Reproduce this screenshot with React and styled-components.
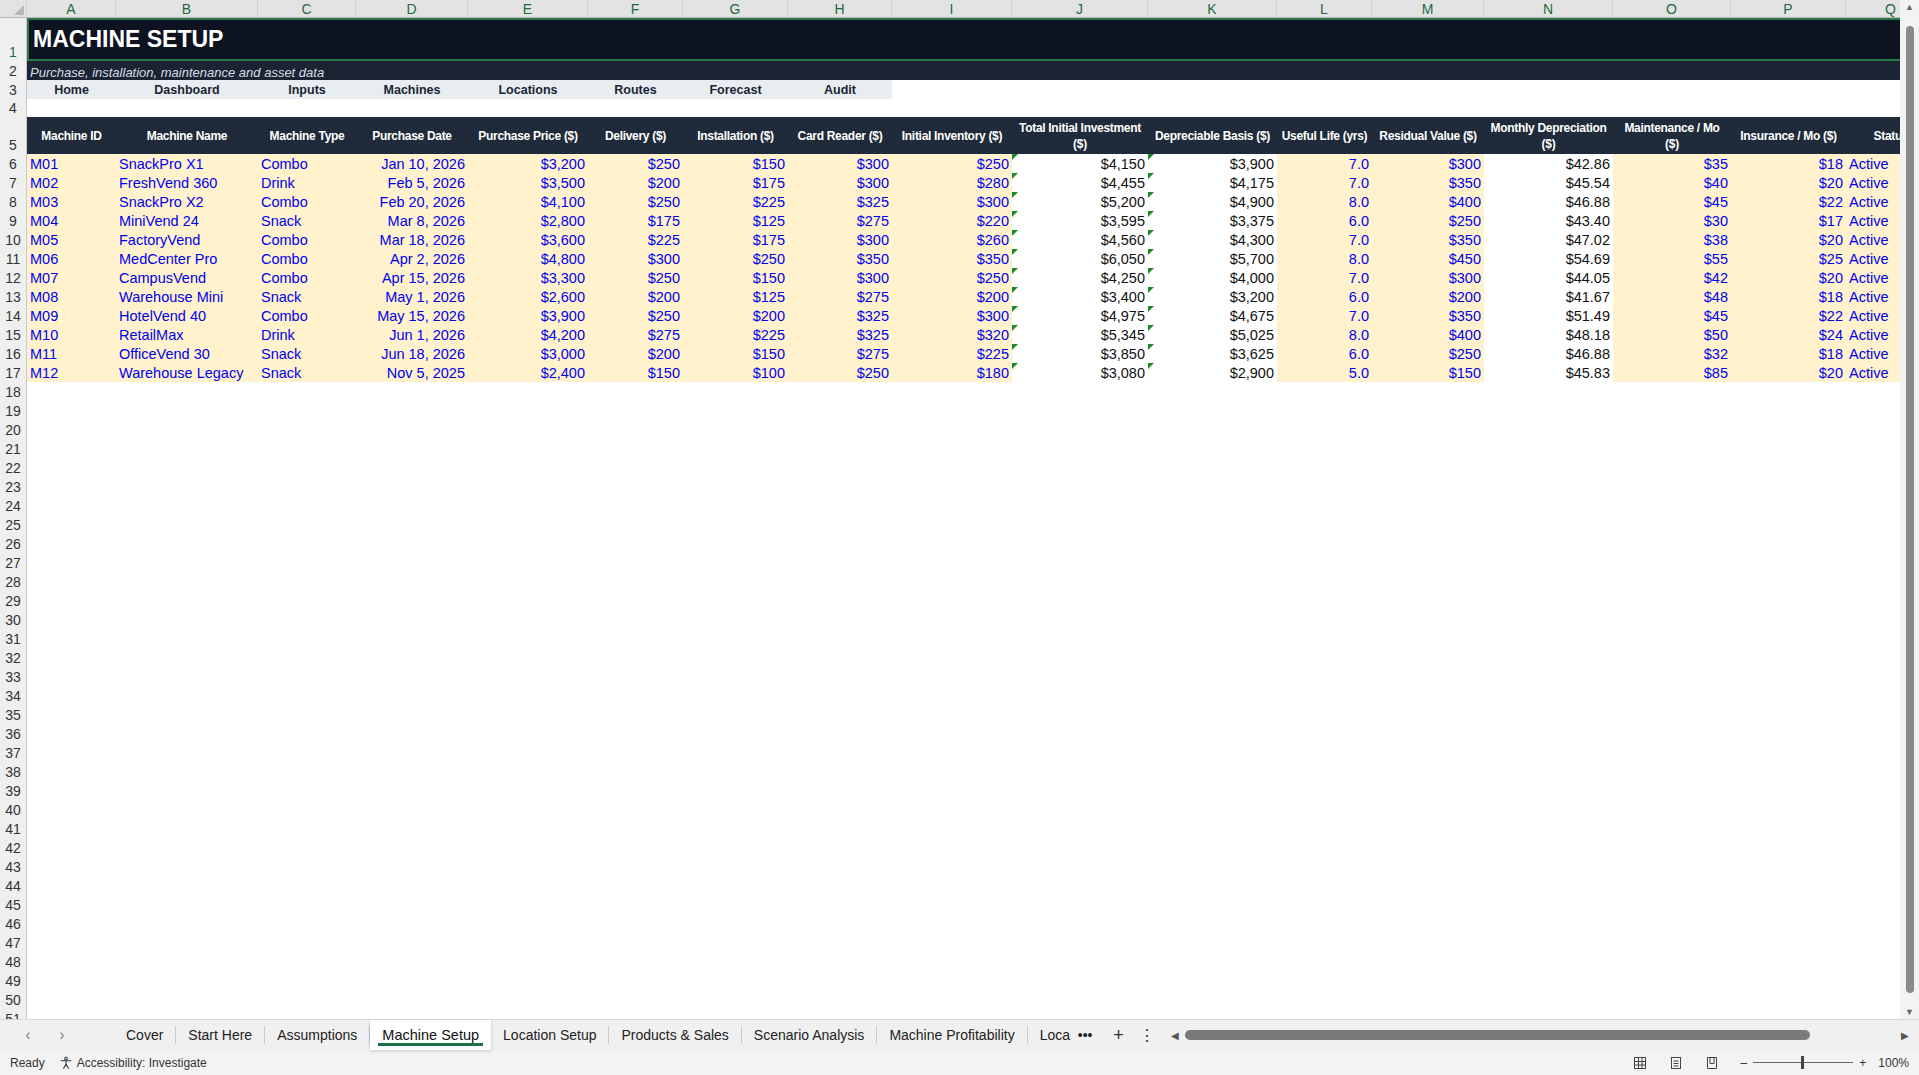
import React from "react";
import styled, { createGlobalStyle } from "styled-components";

const G = createGlobalStyle`
  html,body{margin:0;padding:0;overflow:hidden;background:#fff;}
  body{font-family:"Liberation Sans",Arial,sans-serif;}
`;
const W = [89,142,98,112,120,95,105,104,120,136,129,95,112,129,118,115,90];
const COLS = `27px ${W.map(w=>w+"px").join(" ")}`;
const LET = "ABCDEFGHIJKLMNOPQ".split("");
const HEAD = ["Machine ID","Machine Name","Machine Type","Purchase Date","Purchase Price ($)","Delivery ($)","Installation ($)","Card Reader ($)","Initial Inventory ($)",["Total Initial Investment","($)"],"Depreciable Basis ($)","Useful Life (yrs)","Residual Value ($)",["Monthly Depreciation","($)"],["Maintenance / Mo","($)"],"Insurance / Mo ($)","Status"];
const DATA = [
["M01","SnackPro X1","Combo","Jan 10, 2026","$3,200","$250","$150","$300","$250","$4,150","$3,900","7.0","$300","$42.86","$35","$18","Active"],
["M02","FreshVend 360","Drink","Feb 5, 2026","$3,500","$200","$175","$300","$280","$4,455","$4,175","7.0","$350","$45.54","$40","$20","Active"],
["M03","SnackPro X2","Combo","Feb 20, 2026","$4,100","$250","$225","$325","$300","$5,200","$4,900","8.0","$400","$46.88","$45","$22","Active"],
["M04","MiniVend 24","Snack","Mar 8, 2026","$2,800","$175","$125","$275","$220","$3,595","$3,375","6.0","$250","$43.40","$30","$17","Active"],
["M05","FactoryVend","Combo","Mar 18, 2026","$3,600","$225","$175","$300","$260","$4,560","$4,300","7.0","$350","$47.02","$38","$20","Active"],
["M06","MedCenter Pro","Combo","Apr 2, 2026","$4,800","$300","$250","$350","$350","$6,050","$5,700","8.0","$450","$54.69","$55","$25","Active"],
["M07","CampusVend","Combo","Apr 15, 2026","$3,300","$250","$150","$300","$250","$4,250","$4,000","7.0","$300","$44.05","$42","$20","Active"],
["M08","Warehouse Mini","Snack","May 1, 2026","$2,600","$200","$125","$275","$200","$3,400","$3,200","6.0","$200","$41.67","$48","$18","Active"],
["M09","HotelVend 40","Combo","May 15, 2026","$3,900","$250","$200","$325","$300","$4,975","$4,675","7.0","$350","$51.49","$45","$22","Active"],
["M10","RetailMax","Drink","Jun 1, 2026","$4,200","$275","$225","$325","$320","$5,345","$5,025","8.0","$400","$48.18","$50","$24","Active"],
["M11","OfficeVend 30","Snack","Jun 18, 2026","$3,000","$200","$150","$275","$225","$3,850","$3,625","6.0","$250","$46.88","$32","$18","Active"],
["M12","Warehouse Legacy","Snack","Nov 5, 2025","$2,400","$150","$100","$250","$180","$3,080","$2,900","5.0","$150","$45.83","$85","$20","Active"],
];
const WHITE = [9,10,13];
const NAV = ["Home","Dashboard","Inputs","Machines","Locations","Routes","Forecast","Audit"];

const Page = styled.div`width:1919px;height:1075px;display:flex;flex-direction:column;overflow:hidden;`;
const Main = styled.div`flex:1;display:flex;overflow:hidden;min-height:0;`;
const Sheet = styled.div`flex:1;overflow:hidden;position:relative;`;
const VScroll = styled.div`width:19px;background:#f3f3f3;display:flex;flex-direction:column;align-items:center;justify-content:space-between;
  &>div.t{width:8px;flex:1;margin:14px 0;background:#8a8a8a;border-radius:4px;}
  font-size:9px;color:#666;padding:2px 0;box-sizing:border-box;`;
const Row = styled.div`display:grid;grid-template-columns:${COLS};height:${p=>p.h}px;font-size:14px;`;
const RH = styled.div`background:#efefef;border-right:1px solid #c8c8c8;color:${p=>p.sel?"#1e6b41":"#333"};
  font-size:14px;display:flex;align-items:flex-end;justify-content:center;padding-bottom:1px;box-sizing:border-box;`;
const CH = styled.div`background:#e3e3e3;border-right:1px solid #cfcfcf;border-bottom:1px solid #b8b8b8;color:#1e6b41;display:flex;align-items:center;justify-content:center;font-size:14px;`;
const Corner = styled.div`background:#e3e3e3;border-right:1px solid #cfcfcf;border-bottom:1px solid #b8b8b8;position:relative;
  &:after{content:"";position:absolute;right:2px;bottom:2px;border-left:10px solid transparent;border-bottom:10px solid #b8b8b8;}`;
const Title = styled.div`grid-column:2 / -1;background:#0d1320;border:2px solid #2b7a4b;color:#fff;font-weight:bold;font-size:23px;display:flex;align-items:center;padding-left:4px;`;
const Sub = styled.div`grid-column:2 / -1;background:#1b2433;color:#d8dde4;font-style:italic;font-size:13px;display:flex;align-items:flex-end;padding-left:3px;`;
const Nav = styled.div`background:#e8edf2;font-weight:bold;font-size:12.5px;color:#1b2433;display:flex;align-items:center;justify-content:center;`;
const Cell = styled.div`background:#fff;`;
const HC = styled.div`background:#1f2a3a;color:#fff;font-weight:bold;font-size:12px;letter-spacing:-0.3px;
  display:flex;flex-direction:column;align-items:center;justify-content:center;text-align:center;line-height:16px;white-space:nowrap;overflow:hidden;`;
const DC = styled.div`background:${p=>p.bg};color:${p=>p.black?"#111":"#0000f0"};display:flex;align-items:flex-end;
  justify-content:${p=>p.a};padding:0 3px;white-space:nowrap;overflow:hidden;font-size:14.5px;position:relative;line-height:18px;
  ${p=>p.tri?`&:before{content:"";position:absolute;left:0;top:0;border-top:6px solid #1d8a2a;border-right:6px solid transparent;}`:""}`;

const Tabs = styled.div`height:30px;background:#f0f0f0;border-top:1px solid #d8d8d8;display:flex;align-items:stretch;font-size:14px;color:#222;`;
const Arrow = styled.div`width:32px;display:flex;align-items:center;justify-content:center;color:#888;font-size:16px;`;
const Tab = styled.div`padding:0 12px;display:flex;align-items:center;position:relative;
  border-right:${p=>p.active?"none":"1px solid #ccc"};margin:6px 0;
  ${p=>p.active?`background:#fff;margin:0;box-shadow:0 1px 3px rgba(0,0,0,.2);color:#111;font-size:14.5px;
   &:after{content:"";position:absolute;left:8px;right:8px;bottom:4px;height:3px;background:#1e7145;}`:""}`;
const HScroll = styled.div`flex:1;display:flex;align-items:center;padding:0 10px;gap:6px;color:#555;font-size:10px;
  & .thumb{height:10px;background:#7a7a7a;border-radius:5px;width:625px;}
  & .sp{flex:1}`;
const Status = styled.div`height:25px;background:#f3f3f3;display:flex;align-items:center;font-size:12px;color:#333;padding:0 10px;gap:14px;`;
const Right = styled.div`margin-left:auto;display:flex;align-items:center;gap:22px;`;

const align = i => (i<=2||i===16)?"flex-start":"flex-end";
const bgOf = i => WHITE.includes(i)?"#fff":"#fff2cc";

export default function App(){
  const empty = [];
  for(let r=18;r<=51;r++) empty.push(r);
  return <Page><G/>
    <Main>
      <Sheet>
        <Row h={18}><Corner/>{LET.map(l=><CH key={l}>{l}</CH>)}</Row>
        <Row h={43}><RH sel>1</RH><Title>MACHINE SETUP</Title></Row>
        <Row h={19}><RH>2</RH><Sub>Purchase, installation, maintenance and asset data</Sub></Row>
        <Row h={19}><RH>3</RH>{NAV.map(n=><Nav key={n}>{n}</Nav>)}{Array.from({length:9}).map((_,i)=><Cell key={i}/>)}</Row>
        <Row h={18}><RH>4</RH>{LET.map(l=><Cell key={l}/>)}</Row>
        <Row h={37}><RH>5</RH>{HEAD.map((h,i)=><HC key={i}>{Array.isArray(h)?<><span>{h[0]}</span><span>{h[1]}</span></>:h}</HC>)}</Row>
        {DATA.map((d,ri)=><Row h={19} key={ri}><RH>{ri+6}</RH>
          {d.map((v,i)=><DC key={i} bg={bgOf(i)} a={align(i)} black={WHITE.includes(i)} tri={i===9||i===10}>{v}</DC>)}
        </Row>)}
        {empty.map(r=><Row h={19} key={r}><RH>{r}</RH>{LET.map(l=><Cell key={l}/>)}</Row>)}
      </Sheet>
      <VScroll>▲<div className="t"/>▼</VScroll>
    </Main>
    <Tabs>
      <Arrow style={{width:36,paddingLeft:10}}>‹</Arrow><Arrow>›</Arrow>
      <div style={{width:36}}/>
      {["Cover","Start Here","Assumptions","Machine Setup","Location Setup","Products & Sales","Scenario Analysis","Machine Profitability"].map(t=>
        <Tab key={t} active={t==="Machine Setup"}>{t}</Tab>)}
      <Tab style={{borderRight:"none"}}>Loca&nbsp;&nbsp;•••</Tab>
      <Arrow style={{width:28,color:"#333",fontSize:18}}>+</Arrow>
      <Arrow style={{width:28,color:"#333"}}>⋮</Arrow>
      <HScroll>◀<div className="thumb"/><div className="sp"/>▶</HScroll>
    </Tabs>
    <Status>
      <span>Ready</span>
      <span style={{display:"flex",alignItems:"center",gap:4}}>
        <svg width="14" height="14" viewBox="0 0 16 16" fill="none" stroke="#333" strokeWidth="1.2"><circle cx="8" cy="3" r="1.5"/><path d="M2 5.5h12M8 5.5v4M8 9.5l-3 5M8 9.5l3 5"/></svg>
        Accessibility: Investigate</span>
      <Right>
        <svg width="14" height="14" viewBox="0 0 14 14" fill="none" stroke="#444"><rect x="1.5" y="1.5" width="11" height="11"/><path d="M1.5 5.5h11M1.5 9h11M5.5 1.5v11M9 1.5v11"/></svg>
        <svg width="14" height="14" viewBox="0 0 14 14" fill="none" stroke="#444"><rect x="2.5" y="1.5" width="9" height="11"/><path d="M4.5 5h5M4.5 7.5h5M4.5 10h5"/></svg>
        <svg width="14" height="14" viewBox="0 0 14 14" fill="none" stroke="#444"><path d="M2.5 1.5h9v11h-9zM5 1.5v6h4v-6"/></svg>
        <span style={{display:"flex",alignItems:"center",gap:6}}>–<span style={{width:100,height:1,background:"#666",position:"relative",display:"inline-block"}}><span style={{position:"absolute",left:48,top:-6,width:3,height:13,background:"#444"}}/></span>+<span style={{marginLeft:6}}>100%</span></span>
      </Right>
    </Status>
  </Page>;
}
